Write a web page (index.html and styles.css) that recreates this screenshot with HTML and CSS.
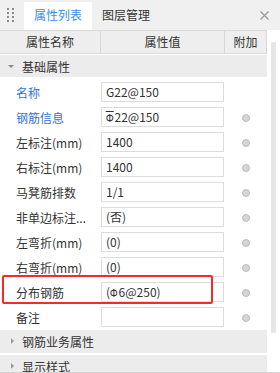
FILE: index.html
```html
<!DOCTYPE html>
<html lang="zh">
<head>
<meta charset="utf-8">
<link rel="stylesheet" href="styles.css">
</head>
<body>
<div class="panel">
  <div class="tabbar">
    <div class="grip"><i></i><i></i><i></i><i></i><i></i><i></i><i></i><i></i></div>
    <div class="tab active">属性列表</div>
    <div class="tab">图层管理</div>
    <div class="close"><svg width="9" height="9" viewBox="0 0 9 9"><path d="M0.5 0.5L8.5 8.5M8.5 0.5L0.5 8.5" stroke="#9a9a9a" stroke-width="1.2"/></svg></div>
  </div>
  <div class="body">
    <div class="grid">
      <div class="head">
        <div class="hc">属性名称</div>
        <div class="hc">属性值</div>
        <div class="hc last">附加</div>
      </div>
      <div class="group first"><span class="tri down"></span>基础属性</div>
      <div class="row"><div class="lbl blue">名称</div><div class="val"><div class="box">G22@150</div></div><div class="ext"></div></div>
      <div class="row"><div class="lbl blue">钢筋信息</div><div class="val"><div class="box"><span class="sym bar">Ф</span>22@150</div></div><div class="ext"><span class="dot"></span></div></div>
      <div class="row"><div class="lbl">左标注(mm)</div><div class="val"><div class="box">1400</div></div><div class="ext"><span class="dot"></span></div></div>
      <div class="row"><div class="lbl">右标注(mm)</div><div class="val"><div class="box">1400</div></div><div class="ext"><span class="dot"></span></div></div>
      <div class="row"><div class="lbl">马凳筋排数</div><div class="val"><div class="box">1/1</div></div><div class="ext"><span class="dot"></span></div></div>
      <div class="row"><div class="lbl">非单边标注...</div><div class="val"><div class="box">(否)</div></div><div class="ext"><span class="dot"></span></div></div>
      <div class="row"><div class="lbl">左弯折(mm)</div><div class="val"><div class="box">(0)</div></div><div class="ext"><span class="dot"></span></div></div>
      <div class="row"><div class="lbl">右弯折(mm)</div><div class="val"><div class="box">(0)</div></div><div class="ext"><span class="dot"></span></div></div>
      <div class="row"><div class="lbl">分布钢筋</div><div class="val"><div class="box">(<span class="sym">Ф</span>6@250)</div></div><div class="ext"><span class="dot"></span></div></div>
      <div class="row"><div class="lbl">备注</div><div class="val"><div class="box"></div></div><div class="ext"><span class="dot"></span></div></div>
      <div class="group"><span class="tri right"></span>钢筋业务属性</div>
      <div class="group"><span class="tri right"></span>显示样式</div>
    </div>
    <div class="scroll"><div class="thumb"></div></div>
  </div>
  <div class="highlight"></div>
</div>
</body>
</html>
```

FILE: styles.css
```css
* { box-sizing: border-box; }
html, body { margin: 0; padding: 0; background: #fff; }
body {
  font-family: "Noto Sans CJK SC", "Noto Sans", sans-serif;
  font-size: 12px;
  color: #333;
}
.panel {
  position: relative;
  width: 280px;
  height: 373px;
  overflow: hidden;
  border-bottom: 1px solid #d6d6d6;
}
.tabbar {
  height: 30px;
  background: #f0f0f0;
  display: flex;
  align-items: flex-end;
  position: relative;
}
.grip {
  width: 24px;
  height: 30px;
  display: grid;
  grid-template-columns: 2px 2px;
  grid-auto-rows: 2px;
  column-gap: 3px;
  row-gap: 2px;
  padding: 8px 0 0 7px;
}
.grip i { display: block; width: 2px; height: 2px; background: #8a8a8a; }
.tab {
  height: 28px;
  line-height: 26px;
  padding: 0 10px;
  color: #333;
}
.tab.active {
  width: 68px;
  padding: 0;
  text-align: center;
  background: #fff;
  color: #3c8cf0;
}
.close {
  position: absolute;
  right: 11px;
  top: 11px;
  width: 9px;
  height: 9px;
  display: flex;
}
.body {
  display: flex;
}
.grid {
  width: 267px;
}
.head {
  display: grid;
  grid-template-columns: 101px 124px 42px;
  height: 24px;
  background: #eeeeee;
  border-top: 1px solid #dadada;
  border-bottom: 1px solid #dadada;
}
.hc {
  text-align: center;
  line-height: 22px;
  border-right: 1px solid #d8d8d8;
}
.group {
  height: 23px;
  margin-bottom: 2px;
  background: #ececec;
  display: flex;
  align-items: center;
  padding-left: 22px;
  position: relative;
}
.group.first {
  height: 22px;
  margin-top: 1px;
  margin-bottom: 3px;
}
.tri {
  position: absolute;
  width: 0;
  height: 0;
}
.tri.down {
  left: 8px;
  top: 10px;
  border-left: 3px solid transparent;
  border-right: 3px solid transparent;
  border-top: 3px solid #8a8a8a;
}
.tri.right {
  left: 11px;
  top: 8px;
  border-top: 3px solid transparent;
  border-bottom: 3px solid transparent;
  border-left: 3px solid #9a9a9a;
}
.row {
  display: grid;
  grid-template-columns: 101px 124px 42px;
  height: 25px;
}
.lbl {
  padding-left: 16px;
  line-height: 25px;
  white-space: nowrap;
  overflow: hidden;
}
.lbl.blue { color: #2f72e0; }
.val { padding: 2px 1px 3px 0; }
.box {
  height: 20px;
  border: 1px solid #dcdcdc;
  padding-left: 4px;
  line-height: 18px;
  color: #333;
  white-space: nowrap;
  overflow: hidden;
}
.sym {
  font-family: "DejaVu Sans", sans-serif;
  font-size: 11px;
  display: inline-block;
  transform: scaleX(0.85);
  margin: 0 0 0 -1px;
}
.bar {
  text-decoration: overline;
}
.ext {
  display: flex;
  align-items: center;
  justify-content: center;
}
.dot {
  width: 8px;
  height: 8px;
  border-radius: 50%;
  background: #d6d6d6;
  border: 1px solid #bdbdbd;
}
.scroll {
  width: 13px;
  padding: 12px 0 0 4px;
}
.thumb {
  width: 5px;
  height: 291px;
  background: #e6e6e6;
  border-radius: 1px;
}
.highlight {
  position: absolute;
  left: 2px;
  top: 275px;
  width: 211px;
  height: 29px;
  border: 2px solid #f52a2a;
  border-radius: 2px;
}
```
